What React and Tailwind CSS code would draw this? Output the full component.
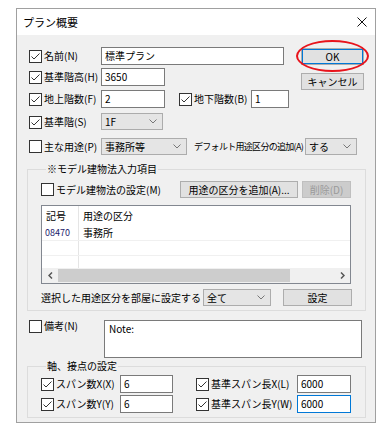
import { useState } from 'react'

function Check({ checked, label, className = '' }) {
  return (
    <div className={`flex items-center h-full ${className}`}>
      <svg width="13" height="13" viewBox="0 0 13 13" className="shrink-0">
        <rect x="0.5" y="0.5" width="12" height="12" fill="#fff" stroke="#333" />
        {checked && <path d="M2.5 6.5 L5 9 L10.5 3.5" fill="none" stroke="#333" strokeWidth="1" />}
      </svg>
      <span className="ml-[2px] whitespace-nowrap">{label}</span>
    </div>
  )
}

function Field({ value, className = '', focus }) {
  return (
    <div
      className={`h-[18px] bg-white border flex items-center pl-[3px] ${
        focus ? 'border-[#0078d7]' : 'border-[#7a7a7a]'
      } ${className}`}
    >
      {value}
    </div>
  )
}

function Combo({ value, className = '' }) {
  return (
    <div
      className={`shrink-0 h-[17px] bg-[#e5e5e5] border border-[#acacac] flex items-center justify-between pl-[3px] pr-[5px] ${className}`}
    >
      <span>{value}</span>
      <svg width="8" height="5" viewBox="0 0 8 5">
        <path d="M0.5 0.5 L4 4 L7.5 0.5" fill="none" stroke="#777" />
      </svg>
    </div>
  )
}

function Btn({ children, className = '', disabled }) {
  return (
    <div
      className={`h-[17px] border flex items-center justify-center ${
        disabled ? 'bg-[#cccccc] border-[#bfbfbf] text-[#9a9a9a]' : 'bg-[#e1e1e1] border-[#adadad]'
      } ${className}`}
    >
      {children}
    </div>
  )
}

export default function App() {
  const [note] = useState('Note:')

  return (
    <div className="relative w-[392px] h-[427px] bg-white pl-[16px] pt-[8px] text-[10px] leading-[12px] text-black font-['Noto_Sans_CJK_JP',sans-serif]">
      <div className="w-[360px] h-[415px] border border-[#a0a0a0] flex flex-col">
        {/* タイトルバー */}
        <div className="h-[26px] bg-white flex items-center justify-between pl-[6px] pr-[8px] shrink-0">
          <span className="text-[11px]">プラン概要</span>
          <svg width="10" height="10" viewBox="0 0 10 10">
            <path d="M0.5 0.5 L9.5 9.5 M9.5 0.5 L0.5 9.5" stroke="#111" strokeWidth="1" />
          </svg>
        </div>

        <div className="flex-1 bg-[#f0f0f0] flex flex-col">
          {/* 上段 */}
          <div className="flex pl-[12px] pt-[12px]">
            <div className="w-[272px] flex flex-col">
              <div className="flex h-[18px]">
                <Check checked label="名前(N)" className="w-[72px]" />
                <Field value="標準プラン" className="w-[183px]" />
              </div>
              <div className="flex h-[18px] mt-[3px]">
                <Check checked label="基準階高(H)" className="w-[72px]" />
                <Field value="3650" className="w-[64px]" />
              </div>
              <div className="flex h-[18px] mt-[4px]">
                <Check checked label="地上階数(F)" className="w-[72px]" />
                <Field value="2" className="w-[64px]" />
                <Check checked label="地下階数(B)" className="w-[72px] ml-[14px]" />
                <Field value="1" className="w-[38px]" />
              </div>
              <div className="flex h-[18px] mt-[5px]">
                <Check checked label="基準階(S)" className="w-[72px]" />
                <Combo value="1F" className="w-[62px]" />
              </div>
            </div>
            <div className="flex flex-col">
              <Btn className="w-[63px] mt-[1px] border-[#0078d7] shadow-[inset_0_0_0_1px_#0078d7]">OK</Btn>
              <Btn className="w-[63px] mt-[8px]">キャンセル</Btn>
            </div>
          </div>

          <div className="flex h-[17px] mt-[7px] pl-[12px] items-center">
            <Check label="主な用途(P)" className="w-[72px] shrink-0" />
            <Combo value="事務所等" className="w-[86px]" />
            <span className="w-[118px] shrink-0 pl-[7px] whitespace-nowrap text-[9px] tracking-[-0.7px]">
              デフォルト用途区分の追加(A)
            </span>
            <Combo value="する" className="w-[52px]" />
          </div>

          {/* モデル建物法 */}
          <fieldset className="ml-[10px] mt-[8px] w-[339px] border border-[#dcdcdc] pl-[13px] pb-[4px]">
            <legend className="ml-[5px] px-[1px]">※モデル建物法入力項目</legend>
            <div className="flex h-[17px] mt-[6px]">
              <Check label="モデル建物法の設定(M)" className="w-[139px]" />
              <Btn className="w-[118px]">用途の区分を追加(A)...</Btn>
              <Btn disabled className="w-[49px] ml-[4px]">削除(D)</Btn>
            </div>
            <div className="mt-[7px] w-[310px] h-[79px] bg-white border border-[#828790] flex flex-col">
              <div className="flex h-[20px] items-center">
                <div className="w-[37px] pl-[4px] h-full flex items-center border-r border-[#e5e5e5]">記号</div>
                <div className="pl-[4px]">用途の区分</div>
              </div>
              <div className="flex h-[15px] border-b border-[#f0f0f0]">
                <div className="w-[37px] pl-[3px] flex items-center border-r border-[#e5e5e5] text-[#1c1c6c] text-[9px]">08470</div>
                <div className="pl-[4px] flex items-center">事務所</div>
              </div>
              <div className="flex h-[15px] border-b border-[#f0f0f0]">
                <div className="w-[37px] border-r border-[#e5e5e5]" />
              </div>
              <div className="flex h-[12px]">
                <div className="w-[37px] border-r border-[#e5e5e5]" />
              </div>
              <div className="h-[15px] bg-[#f0f0f0] flex items-center">
                <div className="w-[16px] flex justify-center">
                  <svg width="5" height="7" viewBox="0 0 5 7">
                    <path d="M4 0.5 L1 3.5 L4 6.5" fill="none" stroke="#555" strokeWidth="1.5" />
                  </svg>
                </div>
                <div className="w-[232px] h-[13px] bg-[#cdcdcd]" />
                <div className="flex-1 flex justify-end pr-[5px]">
                  <svg width="5" height="7" viewBox="0 0 5 7">
                    <path d="M1 0.5 L4 3.5 L1 6.5" fill="none" stroke="#555" strokeWidth="1.5" />
                  </svg>
                </div>
              </div>
            </div>
            <div className="flex h-[17px] mt-[5px] items-center">
              <span className="w-[162px] whitespace-nowrap">選択した用途区分を部屋に設定する</span>
              <Combo value="全て" className="w-[68px]" />
              <Btn className="w-[69px] ml-[12px]">設定</Btn>
            </div>
          </fieldset>

          {/* 備考 */}
          <div className="flex mt-[9px] pl-[12px]">
            <div className="h-[12px] w-[75px]">
              <Check label="備考(N)" />
            </div>
            <div className="w-[258px] h-[38px] bg-white border border-[#7a7a7a] pl-[4px] pt-[2px]">{note}</div>
          </div>

          {/* 軸、接点の設定 */}
          <fieldset className="ml-[10px] mt-[2px] w-[339px] border border-[#dcdcdc] pl-[13px] pb-[4px]">
            <legend className="ml-[5px] px-[1px]">軸、接点の設定</legend>
            <div className="flex h-[18px] mt-[3px]">
              <Check checked label="スパン数X(X)" className="w-[79px]" />
              <Field value="6" className="w-[53px]" />
              <Check checked label="基準スパン長X(L)" className="w-[101px] ml-[23px]" />
              <Field value="6000" className="w-[54px]" />
            </div>
            <div className="flex h-[18px] mt-[2px]">
              <Check checked label="スパン数Y(Y)" className="w-[79px]" />
              <Field value="6" className="w-[53px]" />
              <Check checked label="基準スパン長Y(W)" className="w-[101px] ml-[23px]" />
              <Field value="6000" focus className="w-[54px]" />
            </div>
          </fieldset>
        </div>
      </div>

      {/* 赤丸 */}
      <div className="absolute left-[296px] top-[40px] w-[73px] h-[32px] rounded-[50%] border-2 border-[#e8141c]" />
    </div>
  )
}
